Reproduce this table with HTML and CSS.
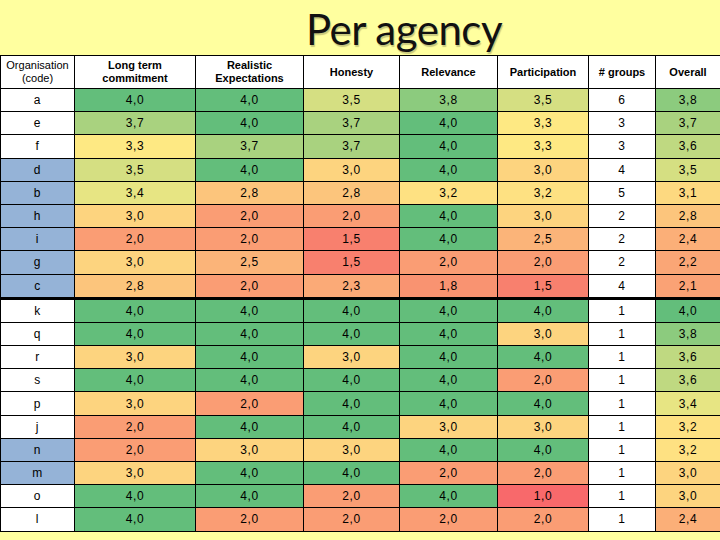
FILE: index.html
```html
<!DOCTYPE html>
<html>
<head>
<meta charset="utf-8">
<link rel="stylesheet" href="styles.css">
</head>
<body>
<div class="slide">
  <h1 class="title">Per agency</h1>
  <table class="grid">
    <colgroup>
      <col class="c1"><col class="c2"><col class="c3"><col class="c4"><col class="c5"><col class="c6"><col class="c7"><col class="c8">
    </colgroup>
    <thead>
      <tr>
        <th class="org">Organisation<br>(code)</th>
        <th>Long term<br>commitment</th>
        <th>Realistic<br>Expectations</th>
        <th>Honesty</th>
        <th>Relevance</th>
        <th>Participation</th>
        <th># groups</th>
        <th>Overall</th>
      </tr>
    </thead>
    <tbody>
      <tr><td>a</td><td class="v40">4,0</td><td class="v40">4,0</td><td class="v35">3,5</td><td class="v38">3,8</td><td class="v35">3,5</td><td>6</td><td class="v38">3,8</td></tr>
      <tr><td>e</td><td class="v37">3,7</td><td class="v40">4,0</td><td class="v37">3,7</td><td class="v40">4,0</td><td class="v33">3,3</td><td>3</td><td class="v37">3,7</td></tr>
      <tr><td>f</td><td class="v33">3,3</td><td class="v37">3,7</td><td class="v37">3,7</td><td class="v40">4,0</td><td class="v33">3,3</td><td>3</td><td class="v36">3,6</td></tr>
      <tr><td class="blue">d</td><td class="v35">3,5</td><td class="v40">4,0</td><td class="v30">3,0</td><td class="v40">4,0</td><td class="v30">3,0</td><td>4</td><td class="v35">3,5</td></tr>
      <tr><td class="blue">b</td><td class="v34">3,4</td><td class="v28">2,8</td><td class="v28">2,8</td><td class="v32">3,2</td><td class="v32">3,2</td><td>5</td><td class="v31">3,1</td></tr>
      <tr><td class="blue">h</td><td class="v30">3,0</td><td class="v20">2,0</td><td class="v20">2,0</td><td class="v40">4,0</td><td class="v30">3,0</td><td>2</td><td class="v28">2,8</td></tr>
      <tr><td class="blue">i</td><td class="v20">2,0</td><td class="v20">2,0</td><td class="v15">1,5</td><td class="v40">4,0</td><td class="v25">2,5</td><td>2</td><td class="v24">2,4</td></tr>
      <tr><td class="blue">g</td><td class="v30">3,0</td><td class="v25">2,5</td><td class="v15">1,5</td><td class="v20">2,0</td><td class="v20">2,0</td><td>2</td><td class="v22">2,2</td></tr>
      <tr class="split"><td class="blue">c</td><td class="v28">2,8</td><td class="v20">2,0</td><td class="v23">2,3</td><td class="v18">1,8</td><td class="v15">1,5</td><td>4</td><td class="v21">2,1</td></tr>
      <tr><td>k</td><td class="v40">4,0</td><td class="v40">4,0</td><td class="v40">4,0</td><td class="v40">4,0</td><td class="v40">4,0</td><td>1</td><td class="v40">4,0</td></tr>
      <tr><td>q</td><td class="v40">4,0</td><td class="v40">4,0</td><td class="v40">4,0</td><td class="v40">4,0</td><td class="v30">3,0</td><td>1</td><td class="v38">3,8</td></tr>
      <tr><td>r</td><td class="v30">3,0</td><td class="v40">4,0</td><td class="v30">3,0</td><td class="v40">4,0</td><td class="v40">4,0</td><td>1</td><td class="v36">3,6</td></tr>
      <tr><td>s</td><td class="v40">4,0</td><td class="v40">4,0</td><td class="v40">4,0</td><td class="v40">4,0</td><td class="v20">2,0</td><td>1</td><td class="v36">3,6</td></tr>
      <tr><td>p</td><td class="v30">3,0</td><td class="v20">2,0</td><td class="v40">4,0</td><td class="v40">4,0</td><td class="v40">4,0</td><td>1</td><td class="v34">3,4</td></tr>
      <tr><td>j</td><td class="v20">2,0</td><td class="v40">4,0</td><td class="v40">4,0</td><td class="v30">3,0</td><td class="v30">3,0</td><td>1</td><td class="v32">3,2</td></tr>
      <tr><td class="blue">n</td><td class="v20">2,0</td><td class="v30">3,0</td><td class="v30">3,0</td><td class="v40">4,0</td><td class="v40">4,0</td><td>1</td><td class="v32">3,2</td></tr>
      <tr><td class="blue">m</td><td class="v30">3,0</td><td class="v40">4,0</td><td class="v40">4,0</td><td class="v20">2,0</td><td class="v20">2,0</td><td>1</td><td class="v30">3,0</td></tr>
      <tr><td>o</td><td class="v40">4,0</td><td class="v40">4,0</td><td class="v20">2,0</td><td class="v40">4,0</td><td class="v10">1,0</td><td>1</td><td class="v30">3,0</td></tr>
      <tr><td>l</td><td class="v40">4,0</td><td class="v20">2,0</td><td class="v20">2,0</td><td class="v20">2,0</td><td class="v20">2,0</td><td>1</td><td class="v24">2,4</td></tr>
    </tbody>
  </table>
</div>
</body>
</html>
```

FILE: styles.css
```css
html, body {
  margin: 0;
  padding: 0;
  background: #ffff9f;
}

.slide {
  width: 720px;
  height: 540px;
  overflow: hidden;
  background: #ffff9f;
}

.title {
  margin: 0;
  height: 55px;
  padding-left: 88px;
  box-sizing: border-box;
  text-align: center;
  font-family: Lato, "Open Sans", sans-serif;
  font-weight: 400;
  font-size: 42px;
  line-height: 58px;
  letter-spacing: -0.5px;
  color: #111;
  text-shadow: 1px 2px 1px rgba(0, 0, 0, 0.22);
}

.grid {
  width: 720px;
  table-layout: fixed;
  border-collapse: collapse;
  font-family: "Liberation Sans", Arial, sans-serif;
  font-size: 12px;
  color: #000;
}

.c1 { width: 74px; }
.c2 { width: 121px; }
.c3 { width: 108px; }
.c4 { width: 96px; }
.c5 { width: 98px; }
.c6 { width: 91px; }
.c7 { width: 67px; }
.c8 { width: 65px; }

.grid th,
.grid td {
  border: 1px solid #000;
  padding: 0;
  text-align: center;
  vertical-align: middle;
  background: #fff;
}

.grid th {
  height: 32px;
  font-size: 11px;
  font-weight: bold;
  line-height: 13px;
}

.grid th.org {
  font-weight: normal;
}

.grid td {
  height: 22.2px;
  letter-spacing: 0.6px;
}

.grid tr.split td {
  border-bottom: 3px solid #000;
}

.grid td.blue { background: #95b3d7; }

.grid td.v40 { background: #63be7b; }
.grid td.v38 { background: #8ccb7e; }
.grid td.v37 { background: #a9d27f; }
.grid td.v36 { background: #bfd981; }
.grid td.v35 { background: #d5df82; }
.grid td.v34 { background: #e7e583; }
.grid td.v33 { background: #fee983; }
.grid td.v32 { background: #fee182; }
.grid td.v31 { background: #fdd980; }
.grid td.v30 { background: #fdd47f; }
.grid td.v28 { background: #fcc57c; }
.grid td.v25 { background: #fbb479; }
.grid td.v24 { background: #fbaf78; }
.grid td.v23 { background: #fbaa77; }
.grid td.v22 { background: #faa676; }
.grid td.v21 { background: #faa275; }
.grid td.v20 { background: #fa9d74; }
.grid td.v18 { background: #f99371; }
.grid td.v15 { background: #f8806e; }
.grid td.v10 { background: #f8696b; }
```
